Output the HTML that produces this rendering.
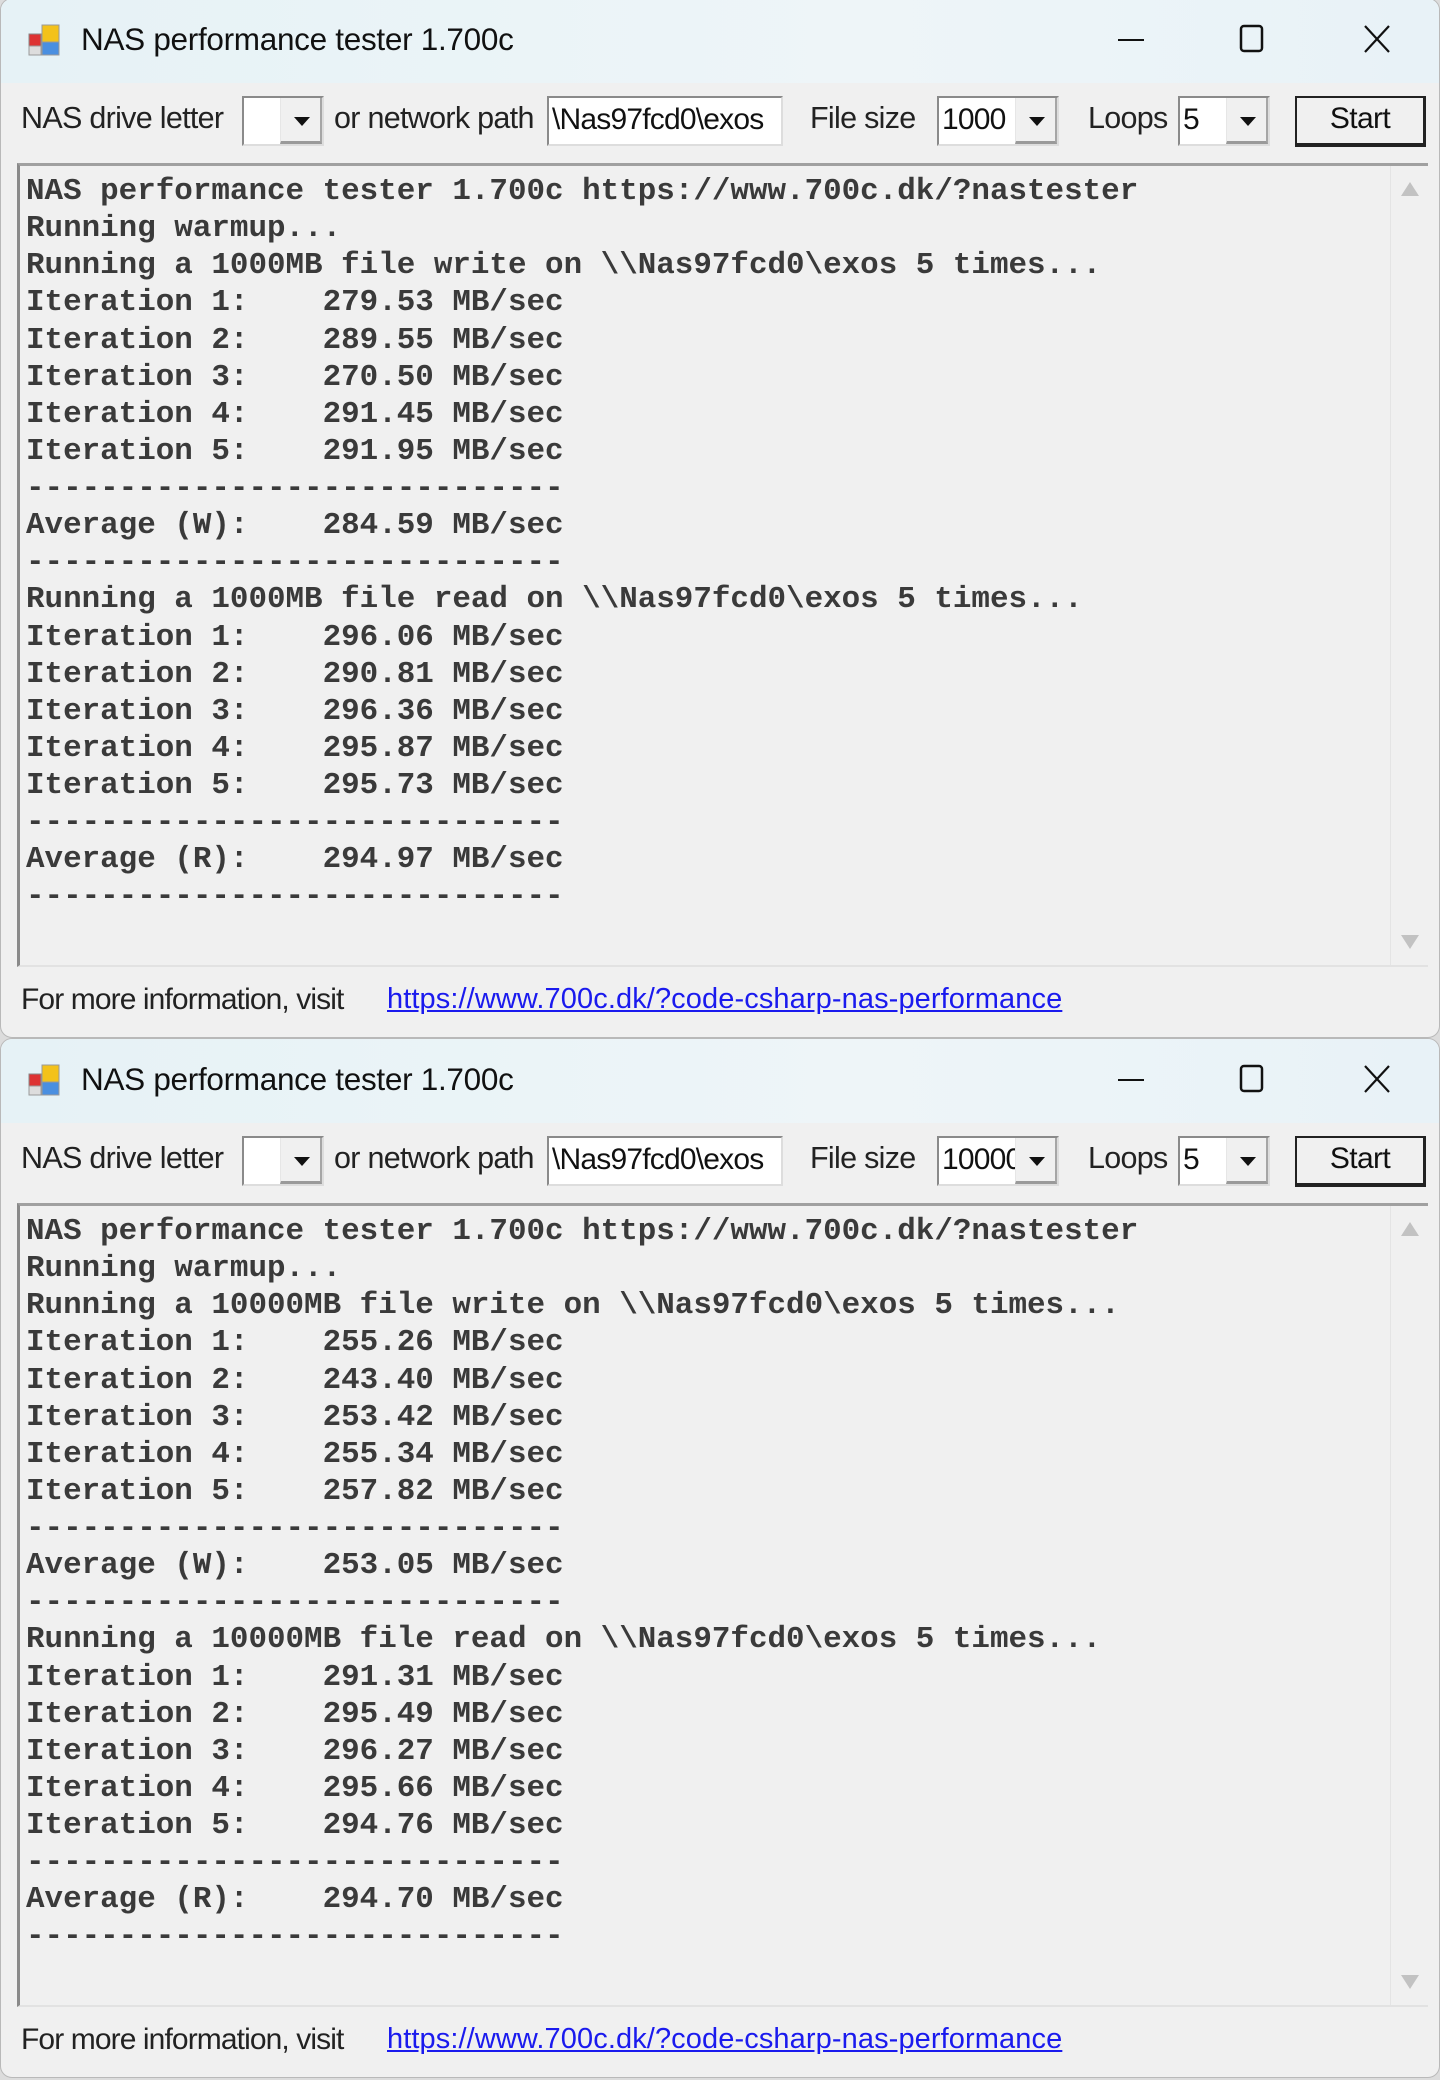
<!DOCTYPE html>
<html><head><meta charset="utf-8"><style>
*{margin:0;padding:0;box-sizing:border-box}
body{width:1440px;height:2080px;background:#dcdcdc;position:relative;overflow:hidden;font-family:"Liberation Sans",sans-serif}
.win{position:absolute;left:0;width:1440px;height:1040px;background:#f0f0f0;border:1px solid #b9b9b9;border-radius:12px;overflow:hidden}
.tb{position:absolute;left:0;top:0;width:100%;height:84px;background:linear-gradient(90deg,#e6f2f6,#eef5f8 60%,#e8f2f7)}
.ttl{position:absolute;left:80px;top:22px;font-size:31.5px;color:#111;letter-spacing:-0.3px}
.ico{position:absolute;left:26px;top:23px;width:36px;height:36px}
.ab{position:absolute;font-size:30.5px;color:#222;letter-spacing:-0.7px;top:102px}
.ctl{position:absolute;top:97px;height:50px;background:#fff;border:2px solid #a0a0a0;border-right-color:#ddd;border-bottom-color:#ddd;border-top-color:#8a8a8a;border-left-color:#8a8a8a}
.ctl span{position:absolute;left:3px;top:5px;font-size:30px;color:#111;letter-spacing:-0.8px;white-space:nowrap;overflow:hidden}
.dd{position:absolute;right:0;top:0;width:42px;height:46px;background:#f0f0f0;border-left:1px solid #e6e6e6;border-bottom:3px solid #9a9a9a;border-right:2px solid #a6a6a6}
.dd:after{content:"";position:absolute;left:13px;top:19px;border-left:8px solid transparent;border-right:8px solid transparent;border-top:9px solid #111}
.btn{position:absolute;left:1294px;top:97px;width:131px;height:51px;border:2px solid #222;border-right-width:3px;border-bottom-width:4px;background:#f0f0f0;font-size:30px;text-align:center;line-height:42px;color:#111;letter-spacing:-0.6px}
.ta{position:absolute;left:16px;top:164px;width:1411px;height:804px;border-top:3px solid #a0a0a0;border-left:3px solid #8a8a8a;border-bottom:2px solid #e2e2e2;background:#f0f0f0}
.sb{position:absolute;right:0;top:0;width:38px;height:100%;background:#f0f0f0;border-left:1px solid #e4e4e4}
.up{position:absolute;left:10px;top:16px;border-left:9px solid transparent;border-right:9px solid transparent;border-bottom:14px solid #c2c2c2}
.dn{position:absolute;left:10px;bottom:16px;border-left:9px solid transparent;border-right:9px solid transparent;border-top:14px solid #c2c2c2}
pre{position:absolute;left:6px;top:7px;font-family:"Liberation Mono",monospace;font-weight:bold;font-size:30.9px;line-height:37.13px;color:#3a3a3a}
.ft{position:absolute;left:20px;top:984px;font-size:30px;color:#222;letter-spacing:-0.9px}
.lk{position:absolute;left:386px;top:984px;font-size:29px;color:#1a1aee;text-decoration:underline;letter-spacing:0.1px}
.wc{position:absolute;top:20px}
</style></head><body>

<div class="win" style="top:-2px">
 <div class="tb">
  <svg class="ico" viewBox="0 0 36 36"><rect x="2" y="12" width="12" height="12" fill="#d33" stroke="#888"/><rect x="15" y="3" width="17" height="17" fill="#f3c21b" stroke="#999"/><rect x="15" y="20" width="17" height="13" fill="#4a8fe0" stroke="#999"/><rect x="2" y="24" width="12" height="9" fill="#ddd" stroke="#999"/></svg>
  <div class="ttl">NAS performance tester 1.700c</div>
  <svg class="wc" style="left:1115px" width="30" height="40"><line x1="2" y1="21" x2="28" y2="21" stroke="#111" stroke-width="2"/></svg>
  <svg class="wc" style="left:1236px" width="30" height="40"><rect x="4" y="7" width="21" height="25" rx="3" fill="none" stroke="#111" stroke-width="2.5"/></svg>
  <svg class="wc" style="left:1361px" width="30" height="40"><path d="M3 7L27 33M27 7L3 33" stroke="#111" stroke-width="2.2"/></svg>
 </div>
 <div class="ab" style="left:20px">NAS drive letter</div>
 <div class="ctl" style="left:241px;width:82px"><div class="dd"></div></div>
 <div class="ab" style="left:333px">or network path</div>
 <div class="ctl" style="left:546px;width:236px"><span style="width:228px">\Nas97fcd0\exos</span></div>
 <div class="ab" style="left:809px">File size</div>
 <div class="ctl" style="left:936px;width:122px"><span style="width:74px">1000</span><div class="dd"></div></div>
 <div class="ab" style="left:1087px">Loops</div>
 <div class="ctl" style="left:1177px;width:92px"><span>5</span><div class="dd"></div></div>
 <div class="btn">Start</div>
 <div class="ta"><div class="sb"><div class="up"></div><div class="dn"></div></div>
<pre>NAS performance tester 1.700c https://www.700c.dk/?nastester
Running warmup...
Running a 1000MB file write on \\Nas97fcd0\exos 5 times...
Iteration 1:    279.53 MB/sec
Iteration 2:    289.55 MB/sec
Iteration 3:    270.50 MB/sec
Iteration 4:    291.45 MB/sec
Iteration 5:    291.95 MB/sec
-----------------------------
Average (W):    284.59 MB/sec
-----------------------------
Running a 1000MB file read on \\Nas97fcd0\exos 5 times...
Iteration 1:    296.06 MB/sec
Iteration 2:    290.81 MB/sec
Iteration 3:    296.36 MB/sec
Iteration 4:    295.87 MB/sec
Iteration 5:    295.73 MB/sec
-----------------------------
Average (R):    294.97 MB/sec
-----------------------------</pre></div>
 <div class="ft">For more information, visit</div>
 <div class="lk">https://www.700c.dk/?code-csharp-nas-performance</div>
</div>

<div class="win" style="top:1038px">
 <div class="tb">
  <svg class="ico" viewBox="0 0 36 36"><rect x="2" y="12" width="12" height="12" fill="#d33" stroke="#888"/><rect x="15" y="3" width="17" height="17" fill="#f3c21b" stroke="#999"/><rect x="15" y="20" width="17" height="13" fill="#4a8fe0" stroke="#999"/><rect x="2" y="24" width="12" height="9" fill="#ddd" stroke="#999"/></svg>
  <div class="ttl">NAS performance tester 1.700c</div>
  <svg class="wc" style="left:1115px" width="30" height="40"><line x1="2" y1="21" x2="28" y2="21" stroke="#111" stroke-width="2"/></svg>
  <svg class="wc" style="left:1236px" width="30" height="40"><rect x="4" y="7" width="21" height="25" rx="3" fill="none" stroke="#111" stroke-width="2.5"/></svg>
  <svg class="wc" style="left:1361px" width="30" height="40"><path d="M3 7L27 33M27 7L3 33" stroke="#111" stroke-width="2.2"/></svg>
 </div>
 <div class="ab" style="left:20px">NAS drive letter</div>
 <div class="ctl" style="left:241px;width:82px"><div class="dd"></div></div>
 <div class="ab" style="left:333px">or network path</div>
 <div class="ctl" style="left:546px;width:236px"><span style="width:228px">\Nas97fcd0\exos</span></div>
 <div class="ab" style="left:809px">File size</div>
 <div class="ctl" style="left:936px;width:122px"><span style="width:74px">10000</span><div class="dd"></div></div>
 <div class="ab" style="left:1087px">Loops</div>
 <div class="ctl" style="left:1177px;width:92px"><span>5</span><div class="dd"></div></div>
 <div class="btn">Start</div>
 <div class="ta"><div class="sb"><div class="up"></div><div class="dn"></div></div>
<pre>NAS performance tester 1.700c https://www.700c.dk/?nastester
Running warmup...
Running a 10000MB file write on \\Nas97fcd0\exos 5 times...
Iteration 1:    255.26 MB/sec
Iteration 2:    243.40 MB/sec
Iteration 3:    253.42 MB/sec
Iteration 4:    255.34 MB/sec
Iteration 5:    257.82 MB/sec
-----------------------------
Average (W):    253.05 MB/sec
-----------------------------
Running a 10000MB file read on \\Nas97fcd0\exos 5 times...
Iteration 1:    291.31 MB/sec
Iteration 2:    295.49 MB/sec
Iteration 3:    296.27 MB/sec
Iteration 4:    295.66 MB/sec
Iteration 5:    294.76 MB/sec
-----------------------------
Average (R):    294.70 MB/sec
-----------------------------</pre></div>
 <div class="ft">For more information, visit</div>
 <div class="lk">https://www.700c.dk/?code-csharp-nas-performance</div>
</div>
</body></html>
